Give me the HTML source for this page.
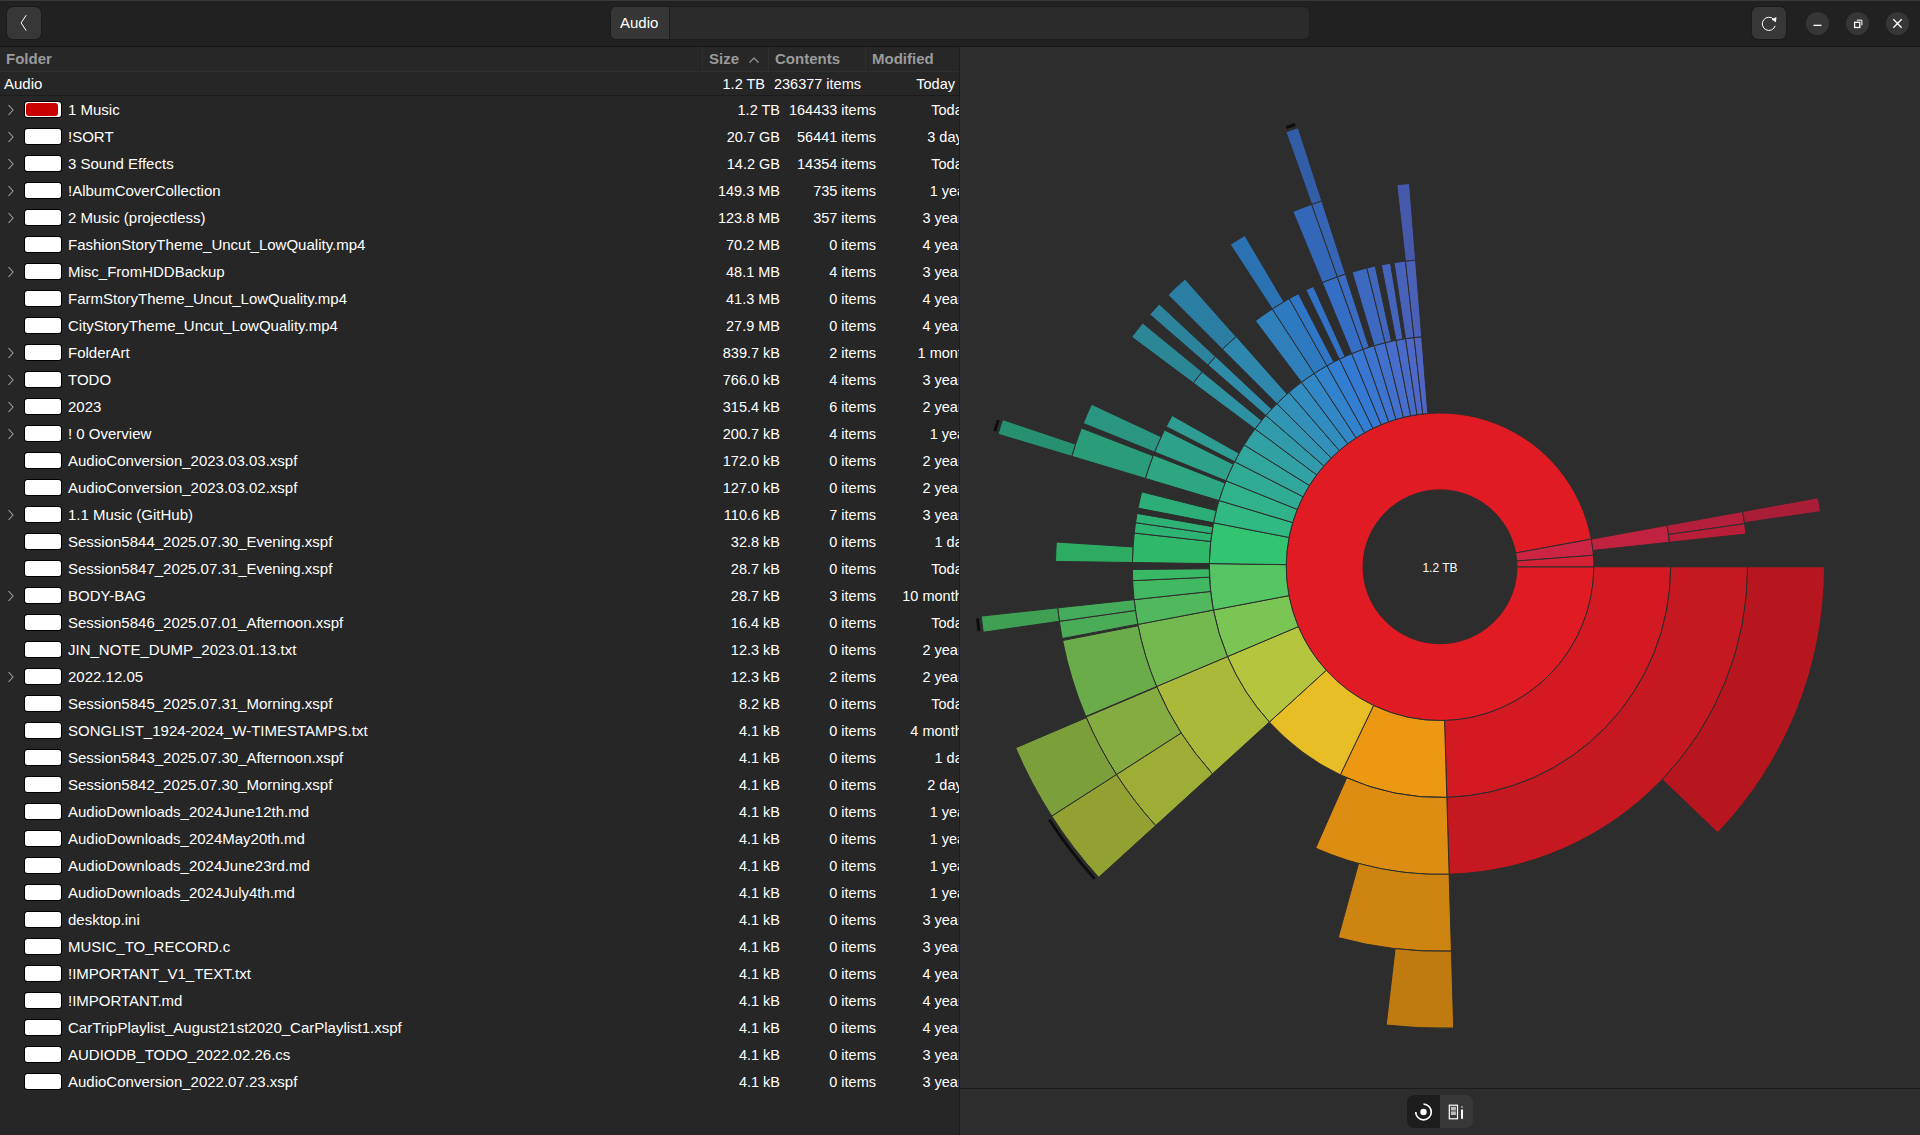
<!DOCTYPE html>
<html><head><meta charset="utf-8">
<style>
*{margin:0;padding:0;box-sizing:border-box}
html,body{width:1920px;height:1135px;overflow:hidden;background:#262626;font-family:"Liberation Sans",sans-serif;color:#fff}
#hdr{position:absolute;left:0;top:0;width:1920px;height:47px;background:#212121;border-top:1px solid #383838;border-bottom:1px solid #161616}
.btn{position:absolute;background:#373737;border-radius:6px;box-shadow:0 0 0 1px #1b1b1b}
#path{position:absolute;left:611px;top:7px;width:698px;height:32px;background:#2b2b2b;border-radius:5px;box-shadow:0 0 0 1px #1d1d1d;overflow:hidden}
#pathbtn{position:absolute;left:0;top:0;width:59px;height:32px;background:#363636;border-right:1px solid #1d1d1d;font-size:15px;line-height:32px;padding-left:9px;color:#fff}
.wc{position:absolute;top:11.5px;width:23px;height:23px;border-radius:12px;background:#363636}
#list{position:absolute;left:0;top:47px;width:959px;height:1088px;background:#262626;overflow:hidden}
#colhdr{position:absolute;left:0;top:0;width:959px;height:25px;background:#272727;border-bottom:1px solid #2f2f2f}
#colhdr span{position:absolute;top:0;line-height:24px;font-size:15px;font-weight:bold;color:#9a9a9a}
.vsep{position:absolute;top:0;width:1px;height:24px;background:#2f2f2f}
#root{position:absolute;left:0;top:25px;width:959px;height:24px;border-bottom:1px solid #1c1c1c;font-size:15px;line-height:24px}
#root span{position:absolute;top:0}
.row{position:absolute;left:0;width:959px;height:27px;font-size:15px;line-height:27px;white-space:nowrap}
.row span{position:absolute;top:0}
.chev{position:absolute;left:7px;top:8px}
.sw{position:absolute;left:25px;top:6px;width:36px;height:15px;background:#fff;border-radius:2.5px;box-shadow:0 0 0 1px #000}
.sw.red::after{content:'';position:absolute;left:1px;top:1px;width:32px;height:12.5px;background:#c80000;border-radius:3px}
.nm{left:68px}
.sz{right:179px;text-align:right;font-size:14.5px;top:1px!important}
.ct{right:83px;text-align:right;font-size:14.5px;top:1px!important}
.md{right:-11px;text-align:right;font-size:14.5px;top:1px!important}
#vline{position:absolute;left:959px;top:47px;width:1px;height:1088px;background:#1c1c1c}
#chart{position:absolute;left:960px;top:47px;width:960px;height:1088px;background:#2d2d2d}
#bline{position:absolute;left:960px;top:1088px;width:960px;height:1px;background:#1b1b1b}
#tog{position:absolute;left:1407px;top:1095px;width:66px;height:33px;border-radius:7px;overflow:hidden;background:#383838}
#tog .a{position:absolute;left:0;top:0;width:33px;height:33px;background:#1d1d1d}
</style></head><body>
<div id="hdr"></div>
<div class="btn" style="left:7px;top:7px;width:34px;height:32px"><svg width="34" height="32" viewBox="0 0 34 32"><path d="M19.2,8.2 L14.1,15.9 L19.2,23.6" fill="none" stroke="#fff" stroke-width="1"/></svg></div>
<div id="path"><div id="pathbtn">Audio</div></div>
<div class="btn" style="left:1752px;top:7px;width:34px;height:32px"><svg width="34" height="32" viewBox="0 0 34 32"><path d="M21.8,12.4 A6.6,6.6 0 1 0 23.2,18.8" fill="none" stroke="#fff" stroke-width="1"/><path d="M19.6,12.6 L24.4,10.0 L24.0,15.2 Z" fill="#fff"/></svg></div>
<div class="wc" style="left:1805.5px"><svg width="23" height="23"><rect x="7.5" y="12.7" width="8" height="1.3" fill="#fff"/></svg></div>
<div class="wc" style="left:1845.5px"><svg width="23" height="23"><rect x="8.6" y="10.3" width="5.2" height="5.2" fill="none" stroke="#fff" stroke-width="1.3"/><path d="M10.8,8.2 H15.9 V13.3" fill="none" stroke="#fff" stroke-width="1"/></svg></div>
<div class="wc" style="left:1885.5px"><svg width="23" height="23"><path d="M7.3,7.3 L15.7,15.7 M15.7,7.3 L7.3,15.7" stroke="#fff" stroke-width="1.3"/></svg></div>

<div id="list">
<div id="colhdr"><span style="left:6px">Folder</span><div class="vsep" style="left:702px"></div><span style="left:709px">Size</span>
<svg style="position:absolute;left:748px;top:9px" width="12" height="8"><path d="M1.5,6.5 L6,2 L10.5,6.5" fill="none" stroke="#9a9a9a" stroke-width="1.2"/></svg>
<div class="vsep" style="left:768px"></div><span style="left:775px">Contents</span><div class="vsep" style="left:865px"></div><span style="left:872px">Modified</span></div>
<div id="root"><span style="left:4px">Audio</span><span style="right:194px;font-size:14.5px">1.2 TB</span><span style="right:98px;font-size:14.5px">236377 items</span><span style="right:4px;font-size:14.5px">Today</span></div>
</div>
<div id="rows" style="position:absolute;left:0;top:0;width:959px;height:1135px;overflow:hidden">
<div class="row" style="top:96px"><svg class="chev" width="8" height="12" viewBox="0 0 8 12"><path d="M1.5,1 L6,6 L1.5,11" fill="none" stroke="#a0a0a0" stroke-width="1.1"/></svg><div class="sw red"></div><span class="nm">1 Music</span><span class="sz">1.2 TB</span><span class="ct">164433 items</span><span class="md">Today</span></div>
<div class="row" style="top:123px"><svg class="chev" width="8" height="12" viewBox="0 0 8 12"><path d="M1.5,1 L6,6 L1.5,11" fill="none" stroke="#a0a0a0" stroke-width="1.1"/></svg><div class="sw"></div><span class="nm">!SORT</span><span class="sz">20.7 GB</span><span class="ct">56441 items</span><span class="md">3 days</span></div>
<div class="row" style="top:150px"><svg class="chev" width="8" height="12" viewBox="0 0 8 12"><path d="M1.5,1 L6,6 L1.5,11" fill="none" stroke="#a0a0a0" stroke-width="1.1"/></svg><div class="sw"></div><span class="nm">3 Sound Effects</span><span class="sz">14.2 GB</span><span class="ct">14354 items</span><span class="md">Today</span></div>
<div class="row" style="top:177px"><svg class="chev" width="8" height="12" viewBox="0 0 8 12"><path d="M1.5,1 L6,6 L1.5,11" fill="none" stroke="#a0a0a0" stroke-width="1.1"/></svg><div class="sw"></div><span class="nm">!AlbumCoverCollection</span><span class="sz">149.3 MB</span><span class="ct">735 items</span><span class="md">1 year</span></div>
<div class="row" style="top:204px"><svg class="chev" width="8" height="12" viewBox="0 0 8 12"><path d="M1.5,1 L6,6 L1.5,11" fill="none" stroke="#a0a0a0" stroke-width="1.1"/></svg><div class="sw"></div><span class="nm">2 Music (projectless)</span><span class="sz">123.8 MB</span><span class="ct">357 items</span><span class="md">3 years</span></div>
<div class="row" style="top:231px"><div class="sw"></div><span class="nm">FashionStoryTheme_Uncut_LowQuality.mp4</span><span class="sz">70.2 MB</span><span class="ct">0 items</span><span class="md">4 years</span></div>
<div class="row" style="top:258px"><svg class="chev" width="8" height="12" viewBox="0 0 8 12"><path d="M1.5,1 L6,6 L1.5,11" fill="none" stroke="#a0a0a0" stroke-width="1.1"/></svg><div class="sw"></div><span class="nm">Misc_FromHDDBackup</span><span class="sz">48.1 MB</span><span class="ct">4 items</span><span class="md">3 years</span></div>
<div class="row" style="top:285px"><div class="sw"></div><span class="nm">FarmStoryTheme_Uncut_LowQuality.mp4</span><span class="sz">41.3 MB</span><span class="ct">0 items</span><span class="md">4 years</span></div>
<div class="row" style="top:312px"><div class="sw"></div><span class="nm">CityStoryTheme_Uncut_LowQuality.mp4</span><span class="sz">27.9 MB</span><span class="ct">0 items</span><span class="md">4 years</span></div>
<div class="row" style="top:339px"><svg class="chev" width="8" height="12" viewBox="0 0 8 12"><path d="M1.5,1 L6,6 L1.5,11" fill="none" stroke="#a0a0a0" stroke-width="1.1"/></svg><div class="sw"></div><span class="nm">FolderArt</span><span class="sz">839.7 kB</span><span class="ct">2 items</span><span class="md">1 month</span></div>
<div class="row" style="top:366px"><svg class="chev" width="8" height="12" viewBox="0 0 8 12"><path d="M1.5,1 L6,6 L1.5,11" fill="none" stroke="#a0a0a0" stroke-width="1.1"/></svg><div class="sw"></div><span class="nm">TODO</span><span class="sz">766.0 kB</span><span class="ct">4 items</span><span class="md">3 years</span></div>
<div class="row" style="top:393px"><svg class="chev" width="8" height="12" viewBox="0 0 8 12"><path d="M1.5,1 L6,6 L1.5,11" fill="none" stroke="#a0a0a0" stroke-width="1.1"/></svg><div class="sw"></div><span class="nm">2023</span><span class="sz">315.4 kB</span><span class="ct">6 items</span><span class="md">2 years</span></div>
<div class="row" style="top:420px"><svg class="chev" width="8" height="12" viewBox="0 0 8 12"><path d="M1.5,1 L6,6 L1.5,11" fill="none" stroke="#a0a0a0" stroke-width="1.1"/></svg><div class="sw"></div><span class="nm">! 0 Overview</span><span class="sz">200.7 kB</span><span class="ct">4 items</span><span class="md">1 year</span></div>
<div class="row" style="top:447px"><div class="sw"></div><span class="nm">AudioConversion_2023.03.03.xspf</span><span class="sz">172.0 kB</span><span class="ct">0 items</span><span class="md">2 years</span></div>
<div class="row" style="top:474px"><div class="sw"></div><span class="nm">AudioConversion_2023.03.02.xspf</span><span class="sz">127.0 kB</span><span class="ct">0 items</span><span class="md">2 years</span></div>
<div class="row" style="top:501px"><svg class="chev" width="8" height="12" viewBox="0 0 8 12"><path d="M1.5,1 L6,6 L1.5,11" fill="none" stroke="#a0a0a0" stroke-width="1.1"/></svg><div class="sw"></div><span class="nm">1.1 Music (GitHub)</span><span class="sz">110.6 kB</span><span class="ct">7 items</span><span class="md">3 years</span></div>
<div class="row" style="top:528px"><div class="sw"></div><span class="nm">Session5844_2025.07.30_Evening.xspf</span><span class="sz">32.8 kB</span><span class="ct">0 items</span><span class="md">1 day</span></div>
<div class="row" style="top:555px"><div class="sw"></div><span class="nm">Session5847_2025.07.31_Evening.xspf</span><span class="sz">28.7 kB</span><span class="ct">0 items</span><span class="md">Today</span></div>
<div class="row" style="top:582px"><svg class="chev" width="8" height="12" viewBox="0 0 8 12"><path d="M1.5,1 L6,6 L1.5,11" fill="none" stroke="#a0a0a0" stroke-width="1.1"/></svg><div class="sw"></div><span class="nm">BODY-BAG</span><span class="sz">28.7 kB</span><span class="ct">3 items</span><span class="md">10 months</span></div>
<div class="row" style="top:609px"><div class="sw"></div><span class="nm">Session5846_2025.07.01_Afternoon.xspf</span><span class="sz">16.4 kB</span><span class="ct">0 items</span><span class="md">Today</span></div>
<div class="row" style="top:636px"><div class="sw"></div><span class="nm">JIN_NOTE_DUMP_2023.01.13.txt</span><span class="sz">12.3 kB</span><span class="ct">0 items</span><span class="md">2 years</span></div>
<div class="row" style="top:663px"><svg class="chev" width="8" height="12" viewBox="0 0 8 12"><path d="M1.5,1 L6,6 L1.5,11" fill="none" stroke="#a0a0a0" stroke-width="1.1"/></svg><div class="sw"></div><span class="nm">2022.12.05</span><span class="sz">12.3 kB</span><span class="ct">2 items</span><span class="md">2 years</span></div>
<div class="row" style="top:690px"><div class="sw"></div><span class="nm">Session5845_2025.07.31_Morning.xspf</span><span class="sz">8.2 kB</span><span class="ct">0 items</span><span class="md">Today</span></div>
<div class="row" style="top:717px"><div class="sw"></div><span class="nm">SONGLIST_1924-2024_W-TIMESTAMPS.txt</span><span class="sz">4.1 kB</span><span class="ct">0 items</span><span class="md">4 months</span></div>
<div class="row" style="top:744px"><div class="sw"></div><span class="nm">Session5843_2025.07.30_Afternoon.xspf</span><span class="sz">4.1 kB</span><span class="ct">0 items</span><span class="md">1 day</span></div>
<div class="row" style="top:771px"><div class="sw"></div><span class="nm">Session5842_2025.07.30_Morning.xspf</span><span class="sz">4.1 kB</span><span class="ct">0 items</span><span class="md">2 days</span></div>
<div class="row" style="top:798px"><div class="sw"></div><span class="nm">AudioDownloads_2024June12th.md</span><span class="sz">4.1 kB</span><span class="ct">0 items</span><span class="md">1 year</span></div>
<div class="row" style="top:825px"><div class="sw"></div><span class="nm">AudioDownloads_2024May20th.md</span><span class="sz">4.1 kB</span><span class="ct">0 items</span><span class="md">1 year</span></div>
<div class="row" style="top:852px"><div class="sw"></div><span class="nm">AudioDownloads_2024June23rd.md</span><span class="sz">4.1 kB</span><span class="ct">0 items</span><span class="md">1 year</span></div>
<div class="row" style="top:879px"><div class="sw"></div><span class="nm">AudioDownloads_2024July4th.md</span><span class="sz">4.1 kB</span><span class="ct">0 items</span><span class="md">1 year</span></div>
<div class="row" style="top:906px"><div class="sw"></div><span class="nm">desktop.ini</span><span class="sz">4.1 kB</span><span class="ct">0 items</span><span class="md">3 years</span></div>
<div class="row" style="top:933px"><div class="sw"></div><span class="nm">MUSIC_TO_RECORD.c</span><span class="sz">4.1 kB</span><span class="ct">0 items</span><span class="md">3 years</span></div>
<div class="row" style="top:960px"><div class="sw"></div><span class="nm">!IMPORTANT_V1_TEXT.txt</span><span class="sz">4.1 kB</span><span class="ct">0 items</span><span class="md">4 years</span></div>
<div class="row" style="top:987px"><div class="sw"></div><span class="nm">!IMPORTANT.md</span><span class="sz">4.1 kB</span><span class="ct">0 items</span><span class="md">4 years</span></div>
<div class="row" style="top:1014px"><div class="sw"></div><span class="nm">CarTripPlaylist_August21st2020_CarPlaylist1.xspf</span><span class="sz">4.1 kB</span><span class="ct">0 items</span><span class="md">4 years</span></div>
<div class="row" style="top:1041px"><div class="sw"></div><span class="nm">AUDIODB_TODO_2022.02.26.cs</span><span class="sz">4.1 kB</span><span class="ct">0 items</span><span class="md">3 years</span></div>
<div class="row" style="top:1068px"><div class="sw"></div><span class="nm">AudioConversion_2022.07.23.xspf</span><span class="sz">4.1 kB</span><span class="ct">0 items</span><span class="md">3 years</span></div>
</div>
<div id="vline"></div>
<div id="chart"></div>
<svg style="position:absolute;left:0;top:0" width="1920" height="1135" viewBox="0 0 1920 1135">
<g stroke="#2d2d2d" stroke-width="1" stroke-linejoin="round">
<circle cx="1440.0" cy="566.8" r="76.90" fill="#2d2d2d"/>
<path d="M1593.80,566.80A153.80,153.80 0 1 1 1591.30,539.17L1515.65,552.98A76.90,76.90 0 1 0 1516.90,566.80Z" fill="#e01b24"/>
<path d="M1591.30,539.17A153.80,153.80 0 0 1 1593.37,555.27L1516.68,561.03A76.90,76.90 0 0 0 1515.65,552.98Z" fill="#ce2443"/>
<path d="M1593.37,555.27A153.80,153.80 0 0 1 1593.80,566.80L1516.90,566.80A76.90,76.90 0 0 0 1516.68,561.03Z" fill="#d62036"/>
<path d="M1670.70,566.80A230.70,230.70 0 0 1 1446.84,797.40L1444.56,720.53A153.80,153.80 0 0 0 1593.80,566.80Z" fill="#d31922"/>
<path d="M1446.84,797.40A230.70,230.70 0 0 1 1340.32,774.85L1373.55,705.50A153.80,153.80 0 0 0 1444.56,720.53Z" fill="#ec9813"/>
<path d="M1340.32,774.85A230.70,230.70 0 0 1 1269.37,722.06L1326.24,670.31A153.80,153.80 0 0 0 1373.55,705.50Z" fill="#e8be26"/>
<path d="M1269.37,722.06A230.70,230.70 0 0 1 1227.48,656.57L1298.32,626.65A153.80,153.80 0 0 0 1326.24,670.31Z" fill="#b5c63e"/>
<path d="M1227.48,656.57A230.70,230.70 0 0 1 1213.39,610.03L1288.92,595.62A153.80,153.80 0 0 0 1298.32,626.65Z" fill="#7bc555"/>
<path d="M1213.39,610.03A230.70,230.70 0 0 1 1209.32,563.58L1286.21,564.65A153.80,153.80 0 0 0 1288.92,595.62Z" fill="#56c564"/>
<path d="M1209.32,563.58A230.70,230.70 0 0 1 1213.54,522.78L1289.03,537.45A153.80,153.80 0 0 0 1286.21,564.65Z" fill="#33c471"/>
<path d="M1213.54,522.78A230.70,230.70 0 0 1 1219.03,500.51L1292.69,522.60A153.80,153.80 0 0 0 1289.03,537.45Z" fill="#30b982"/>
<path d="M1219.03,500.51A230.70,230.70 0 0 1 1225.95,480.75L1297.30,509.43A153.80,153.80 0 0 0 1292.69,522.60Z" fill="#30b38b"/>
<path d="M1225.95,480.75A230.70,230.70 0 0 1 1234.63,461.71L1303.09,496.74A153.80,153.80 0 0 0 1297.30,509.43Z" fill="#31ac94"/>
<path d="M1234.63,461.71A230.70,230.70 0 0 1 1244.14,444.89L1309.43,485.53A153.80,153.80 0 0 0 1303.09,496.74Z" fill="#31a69c"/>
<path d="M1244.14,444.89A230.70,230.70 0 0 1 1255.03,428.93L1316.69,474.89A153.80,153.80 0 0 0 1309.43,485.53Z" fill="#31a1a4"/>
<path d="M1255.03,428.93A230.70,230.70 0 0 1 1265.89,415.45L1323.93,465.90A153.80,153.80 0 0 0 1316.69,474.89Z" fill="#319bac"/>
<path d="M1265.89,415.45A230.70,230.70 0 0 1 1276.87,403.67L1331.25,458.05A153.80,153.80 0 0 0 1323.93,465.90Z" fill="#3196b3"/>
<path d="M1276.87,403.67A230.70,230.70 0 0 1 1288.95,392.42L1339.30,450.55A153.80,153.80 0 0 0 1331.25,458.05Z" fill="#3191ba"/>
<path d="M1288.95,392.42A230.70,230.70 0 0 1 1301.48,382.31L1347.66,443.81A153.80,153.80 0 0 0 1339.30,450.55Z" fill="#318cc0"/>
<path d="M1301.48,382.31A230.70,230.70 0 0 1 1314.18,373.43L1356.12,437.89A153.80,153.80 0 0 0 1347.66,443.81Z" fill="#3287c7"/>
<path d="M1314.18,373.43A230.70,230.70 0 0 1 1326.92,365.71L1364.62,432.74A153.80,153.80 0 0 0 1356.12,437.89Z" fill="#3283cd"/>
<path d="M1326.92,365.71A230.70,230.70 0 0 1 1339.41,359.18L1372.94,428.39A153.80,153.80 0 0 0 1364.62,432.74Z" fill="#327ed3"/>
<path d="M1339.41,359.18A230.70,230.70 0 0 1 1351.71,353.66L1381.14,424.71A153.80,153.80 0 0 0 1372.94,428.39Z" fill="#347ad5"/>
<path d="M1351.71,353.66A230.70,230.70 0 0 1 1362.99,349.33L1388.66,421.82A153.80,153.80 0 0 0 1381.14,424.71Z" fill="#3977d2"/>
<path d="M1362.99,349.33A230.70,230.70 0 0 1 1374.09,345.71L1396.06,419.41A153.80,153.80 0 0 0 1388.66,421.82Z" fill="#3d74cf"/>
<path d="M1374.09,345.71A230.70,230.70 0 0 1 1385.17,342.71L1403.44,417.41A153.80,153.80 0 0 0 1396.06,419.41Z" fill="#4171cd"/>
<path d="M1385.17,342.71A230.70,230.70 0 0 1 1395.98,340.34L1410.65,415.83A153.80,153.80 0 0 0 1403.44,417.41Z" fill="#466eca"/>
<path d="M1395.98,340.34A230.70,230.70 0 0 1 1405.50,338.69L1417.00,414.73A153.80,153.80 0 0 0 1410.65,415.83Z" fill="#496bc8"/>
<path d="M1405.50,338.69A230.70,230.70 0 0 1 1414.08,337.56L1422.72,413.97A153.80,153.80 0 0 0 1417.00,414.73Z" fill="#4d68c6"/>
<path d="M1414.08,337.56A230.70,230.70 0 0 1 1421.70,336.83L1427.80,413.48A153.80,153.80 0 0 0 1422.72,413.97Z" fill="#5066c4"/>
<path d="M1666.95,525.35A230.70,230.70 0 0 1 1669.39,542.28L1592.93,550.46A153.80,153.80 0 0 0 1591.30,539.17Z" fill="#c1223f"/>
<path d="M1747.60,566.80A307.60,307.60 0 0 1 1449.13,874.26L1446.84,797.40A230.70,230.70 0 0 0 1670.70,566.80Z" fill="#c51820"/>
<path d="M1449.13,874.26A307.60,307.60 0 0 1 1315.62,848.13L1346.72,777.80A230.70,230.70 0 0 0 1446.84,797.40Z" fill="#dd8e12"/>
<path d="M1212.49,773.82A307.60,307.60 0 0 1 1156.64,686.49L1227.48,656.57A230.70,230.70 0 0 0 1269.37,722.06Z" fill="#aab93a"/>
<path d="M1156.64,686.49A307.60,307.60 0 0 1 1137.85,624.44L1213.39,610.03A230.70,230.70 0 0 0 1227.48,656.57Z" fill="#73b950"/>
<path d="M1137.85,624.44A307.60,307.60 0 0 1 1134.16,599.65L1210.62,591.44A230.70,230.70 0 0 0 1213.39,610.03Z" fill="#51b85d"/>
<path d="M1134.16,599.65A307.60,307.60 0 0 1 1132.71,580.65L1209.53,577.18A230.70,230.70 0 0 0 1210.62,591.44Z" fill="#43b862"/>
<path d="M1132.71,580.65A307.60,307.60 0 0 1 1132.41,569.48L1209.31,568.81A230.70,230.70 0 0 0 1209.53,577.18Z" fill="#39b866"/>
<path d="M1132.43,562.51A307.60,307.60 0 0 1 1134.26,533.05L1210.69,541.48A230.70,230.70 0 0 0 1209.32,563.58Z" fill="#30b86a"/>
<path d="M1134.26,533.05A307.60,307.60 0 0 1 1135.58,522.66L1211.69,533.70A230.70,230.70 0 0 0 1210.69,541.48Z" fill="#2db372"/>
<path d="M1135.58,522.66A307.60,307.60 0 0 1 1137.07,513.39L1212.80,526.74A230.70,230.70 0 0 0 1211.69,533.70Z" fill="#2db175"/>
<path d="M1138.05,508.11A307.60,307.60 0 0 1 1141.67,491.86L1216.25,510.60A230.70,230.70 0 0 0 1213.54,522.78Z" fill="#2dae79"/>
<path d="M1145.37,478.41A307.60,307.60 0 0 1 1153.41,455.06L1225.06,483.00A230.70,230.70 0 0 0 1219.03,500.51Z" fill="#2da782"/>
<path d="M1154.60,452.07A307.60,307.60 0 0 1 1164.48,430.03L1233.36,464.22A230.70,230.70 0 0 0 1225.95,480.75Z" fill="#2da18a"/>
<path d="M1166.17,426.67A307.60,307.60 0 0 1 1172.15,415.56L1239.11,453.37A230.70,230.70 0 0 0 1234.63,461.71Z" fill="#2e9c92"/>
<path d="M1193.37,382.97A307.60,307.60 0 0 1 1202.14,371.76L1261.60,420.52A230.70,230.70 0 0 0 1255.03,428.93Z" fill="#2e91a1"/>
<path d="M1207.85,365.00A307.60,307.60 0 0 1 1215.59,356.43L1271.69,409.02A230.70,230.70 0 0 0 1265.89,415.45Z" fill="#2e8ca8"/>
<path d="M1222.49,349.29A307.60,307.60 0 0 1 1236.18,336.42L1287.13,394.02A230.70,230.70 0 0 0 1276.87,403.67Z" fill="#2e88ae"/>
<path d="M1255.31,320.82A307.60,307.60 0 0 1 1272.24,308.97L1314.18,373.43A230.70,230.70 0 0 0 1301.48,382.31Z" fill="#2e7fba"/>
<path d="M1272.24,308.97A307.60,307.60 0 0 1 1289.23,298.68L1326.92,365.71A230.70,230.70 0 0 0 1314.18,373.43Z" fill="#2e7ac0"/>
<path d="M1289.23,298.68A307.60,307.60 0 0 1 1298.44,293.71L1333.83,361.98A230.70,230.70 0 0 0 1326.92,365.71Z" fill="#2f76c6"/>
<path d="M1305.88,289.98A307.60,307.60 0 0 1 1313.42,286.45L1345.06,356.54A230.70,230.70 0 0 0 1339.41,359.18Z" fill="#3172c7"/>
<path d="M1322.29,282.61A307.60,307.60 0 0 1 1337.32,276.84L1362.99,349.33A230.70,230.70 0 0 0 1351.71,353.66Z" fill="#356fc5"/>
<path d="M1337.32,276.84A307.60,307.60 0 0 1 1345.46,274.09L1369.09,347.27A230.70,230.70 0 0 0 1362.99,349.33Z" fill="#396cc2"/>
<path d="M1352.12,272.02A307.60,307.60 0 0 1 1366.89,268.02L1385.17,342.71A230.70,230.70 0 0 0 1374.09,345.71Z" fill="#3d69c0"/>
<path d="M1366.89,268.02A307.60,307.60 0 0 1 1375.26,266.09L1391.44,341.27A230.70,230.70 0 0 0 1385.17,342.71Z" fill="#4167bd"/>
<path d="M1381.31,264.85A307.60,307.60 0 0 1 1390.56,263.20L1402.92,339.10A230.70,230.70 0 0 0 1395.98,340.34Z" fill="#4564bb"/>
<path d="M1394.00,262.66A307.60,307.60 0 0 1 1405.45,261.15L1414.08,337.56A230.70,230.70 0 0 0 1405.50,338.69Z" fill="#4862b9"/>
<path d="M1405.45,261.15A307.60,307.60 0 0 1 1415.60,260.17L1421.70,336.83A230.70,230.70 0 0 0 1414.08,337.56Z" fill="#4b60b7"/>
<path d="M1742.59,511.54A307.60,307.60 0 0 1 1744.57,523.72L1668.43,534.49A230.70,230.70 0 0 0 1666.95,525.35Z" fill="#b51f3b"/>
<path d="M1744.57,523.72A307.60,307.60 0 0 1 1745.86,534.11L1669.39,542.28A230.70,230.70 0 0 0 1668.43,534.49Z" fill="#b81e37"/>
<path d="M1824.50,566.80A384.50,384.50 0 0 1 1717.75,832.69L1662.20,779.51A307.60,307.60 0 0 0 1747.60,566.80Z" fill="#b8161e"/>
<path d="M1451.41,951.13A384.50,384.50 0 0 1 1338.22,937.58L1358.57,863.43A307.60,307.60 0 0 0 1449.13,874.26Z" fill="#ce8411"/>
<path d="M1155.61,825.57A384.50,384.50 0 0 1 1116.44,774.52L1181.15,732.98A307.60,307.60 0 0 0 1212.49,773.82Z" fill="#9ead36"/>
<path d="M1116.44,774.52A384.50,384.50 0 0 1 1086.07,717.04L1156.85,686.99A307.60,307.60 0 0 0 1181.15,732.98Z" fill="#85ac40"/>
<path d="M1085.80,716.42A384.50,384.50 0 0 1 1062.63,640.50L1138.10,625.76A307.60,307.60 0 0 0 1156.64,686.49Z" fill="#6bac4a"/>
<path d="M1062.25,638.52A384.50,384.50 0 0 1 1059.38,621.31L1135.51,610.41A307.60,307.60 0 0 0 1137.80,624.17Z" fill="#4bac57"/>
<path d="M1059.38,621.31A384.50,384.50 0 0 1 1057.70,607.86L1134.16,599.65A307.60,307.60 0 0 0 1135.51,610.41Z" fill="#44ac5a"/>
<path d="M1055.54,561.43A384.50,384.50 0 0 1 1056.30,541.99L1133.04,546.95A307.60,307.60 0 0 0 1132.43,562.51Z" fill="#2dab63"/>
<path d="M1071.72,456.31A384.50,384.50 0 0 1 1081.40,428.07L1153.12,455.81A307.60,307.60 0 0 0 1145.37,478.41Z" fill="#2a9c79"/>
<path d="M1083.25,423.39A384.50,384.50 0 0 1 1091.52,404.30L1161.22,436.80A307.60,307.60 0 0 0 1154.60,452.07Z" fill="#2a9681"/>
<path d="M1131.72,337.01A384.50,384.50 0 0 1 1142.67,323.01L1202.14,371.76A307.60,307.60 0 0 0 1193.37,382.97Z" fill="#2b8796"/>
<path d="M1149.81,314.55A384.50,384.50 0 0 1 1159.25,304.08L1215.40,356.62A307.60,307.60 0 0 0 1207.85,365.00Z" fill="#2b839c"/>
<path d="M1168.12,294.92A384.50,384.50 0 0 1 1184.97,279.05L1235.98,336.60A307.60,307.60 0 0 0 1222.49,349.29Z" fill="#2b7ea2"/>
<path d="M1230.30,244.51A384.50,384.50 0 0 1 1244.85,235.50L1283.88,301.76A307.60,307.60 0 0 0 1272.24,308.97Z" fill="#2b72b3"/>
<path d="M1292.86,211.57A384.50,384.50 0 0 1 1311.65,204.35L1337.32,276.84A307.60,307.60 0 0 0 1322.29,282.61Z" fill="#3268b7"/>
<path d="M1311.65,204.35A384.50,384.50 0 0 1 1321.82,200.91L1345.46,274.09A307.60,307.60 0 0 0 1337.32,276.84Z" fill="#3665b5"/>
<path d="M1396.81,184.73A384.50,384.50 0 0 1 1409.50,183.51L1415.60,260.17A307.60,307.60 0 0 0 1405.45,261.15Z" fill="#4659ab"/>
<path d="M1818.24,497.72A384.50,384.50 0 0 1 1820.52,511.63L1744.42,522.66A307.60,307.60 0 0 0 1742.59,511.54Z" fill="#a91d37"/>
<path d="M1453.69,1028.00A461.40,461.40 0 0 1 1386.17,1025.05L1395.14,948.67A384.50,384.50 0 0 0 1451.41,951.13Z" fill="#bf7b10"/>
<path d="M1098.73,877.33A461.40,461.40 0 0 1 1051.73,816.07L1116.44,774.52A384.50,384.50 0 0 0 1155.61,825.57Z" fill="#93a032"/>
<path d="M1051.73,816.07A461.40,461.40 0 0 1 1015.59,747.82L1086.33,717.65A384.50,384.50 0 0 0 1116.44,774.52Z" fill="#7ba03b"/>
<path d="M983.26,632.21A461.40,461.40 0 0 1 981.24,616.07L1057.70,607.86A384.50,384.50 0 0 0 1059.38,621.31Z" fill="#3f9f53"/>
<path d="M998.06,434.21A461.40,461.40 0 0 1 1002.70,419.63L1075.58,444.16A384.50,384.50 0 0 0 1071.72,456.31Z" fill="#279071"/>
<path d="M1285.98,131.87A461.40,461.40 0 0 1 1298.19,127.73L1321.82,200.91A384.50,384.50 0 0 0 1311.65,204.35Z" fill="#325ea8"/>
</g>
<path d="M1094.53,878.64A465.40,465.40 0 0 1 1049.37,819.79" fill="none" stroke="rgba(0,0,0,0.7)" stroke-width="3"/>
<path d="M979.04,630.93A465.40,465.40 0 0 1 977.46,618.35" fill="none" stroke="rgba(0,0,0,0.7)" stroke-width="3"/>
<path d="M994.77,431.28A465.40,465.40 0 0 1 998.32,420.12" fill="none" stroke="rgba(0,0,0,0.7)" stroke-width="3"/>
<path d="M1286.40,127.48A465.40,465.40 0 0 1 1295.19,124.50" fill="none" stroke="rgba(0,0,0,0.7)" stroke-width="3"/>
<text x="1440.0" y="572.1999999999999" text-anchor="middle" font-family="Liberation Sans" font-size="12" fill="#ffffff">1.2 TB</text>
</svg>
<div id="bline"></div>
<div id="tog"><div class="a"></div>
<svg style="position:absolute;left:0;top:0" width="66" height="33">
<path d="M8.7,17 A7.8,7.8 0 1 0 16.5,9.2" fill="none" stroke="#fff" stroke-width="1.7"/>
<circle cx="16.5" cy="17" r="3.2" fill="#fff"/>
<rect x="42.3" y="10.2" width="8.2" height="13.6" fill="none" stroke="#fff" stroke-width="1.2"/>
<rect x="43.9" y="11.8" width="5" height="3.6" fill="#bbb"/><rect x="43.9" y="16.4" width="5" height="3.6" fill="#bbb"/>
<rect x="54" y="14.5" width="2" height="9.3" fill="#fff"/><rect x="54" y="11" width="2" height="2" fill="#888"/>
</svg></div>
</body></html>
